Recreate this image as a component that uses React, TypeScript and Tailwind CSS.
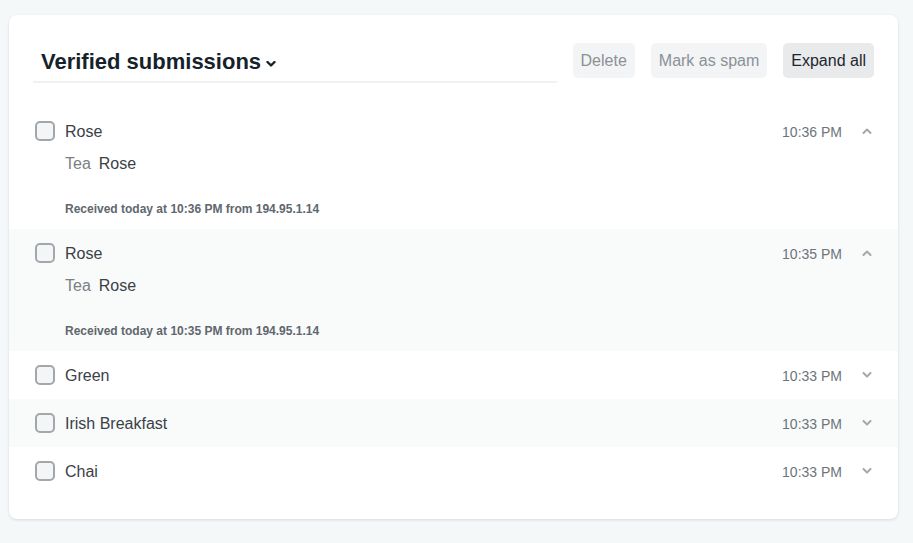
import React from "react";

type Row = { name: string; time: string; expanded?: boolean; gray?: boolean; received?: string };

const rows: Row[] = [
  { name: "Rose", time: "10:36 PM", expanded: true, received: "Received today at 10:36 PM from 194.95.1.14" },
  { name: "Rose", time: "10:35 PM", expanded: true, gray: true, received: "Received today at 10:35 PM from 194.95.1.14" },
  { name: "Green", time: "10:33 PM" },
  { name: "Irish Breakfast", time: "10:33 PM", gray: true },
  { name: "Chai", time: "10:33 PM" },
];

function Chevron({ up, className, sw = 2 }: { up?: boolean; className?: string; sw?: number }) {
  return (
    <svg width="10" height="6" viewBox="0 0 10 6" className={className}>
      <path
        d={up ? "M1.5 5 L5 1.5 L8.5 5" : "M1.5 1 L5 4.5 L8.5 1"}
        fill="none"
        stroke="currentColor"
        strokeWidth={sw}
        strokeLinecap="round"
        strokeLinejoin="round"
      />
    </svg>
  );
}

export default function App() {
  return (
    <div
      className="min-h-[543px] w-[913px] bg-[#f5f8f9] pt-[15px] pl-[9px]"
      style={{ fontFamily: '"Liberation Sans", Arial, sans-serif' }}
    >
      <div className="w-[889px] h-[504px] rounded-lg bg-white shadow-[0_1px_3px_rgba(0,0,0,0.12)] pt-[28px]">
        <div className="flex items-start px-6 gap-4">
          <div className="flex-1 h-[40px] border-b-2 border-[#eff1f2] flex items-center px-2">
            <span className="text-[22px] font-bold text-[#16222a] leading-none">Verified submissions</span>
            <Chevron className="ml-[5px] mt-[3px] text-[#16222a] w-[10px]" sw={2.4} />
          </div>
          <button className="h-[35px] px-2 rounded-[5px] bg-[#f3f4f5] text-[#8b9196] text-base">Delete</button>
          <button className="h-[35px] px-2 rounded-[5px] bg-[#f3f4f5] text-[#8b9196] text-base">Mark as spam</button>
          <button className="h-[35px] px-2 rounded-[5px] bg-[#e8eaeb] text-[#1d272e] text-base">Expand all</button>
        </div>
        <div className="mt-[24px]">
          {rows.map((r, i) => (
            <div key={i} className={`${r.gray ? "bg-[#f9fafa]" : "bg-white"} px-[26px]`}>
              <div className="h-12 flex items-center pt-[2px]">
                <div className="w-5 h-5 -mt-[2px] rounded-[5px] border-2 border-[#a2a7ab] bg-[#f3f5f6]" />
                <span className="ml-[10px] text-base text-[#3a4147]">{r.name}</span>
                <span className="ml-auto text-sm text-[#6d747a]">{r.time}</span>
                <Chevron up={r.expanded} className="ml-[20px] -mt-[2px] text-[#a3a8ac] w-[10px]" />
              </div>
              {r.expanded && (
                <div className="pl-[30px] pb-[13px]">
                  <div className="h-4 flex items-center text-base pt-[2px]">
                    <span className="text-[#7a8086]">Tea</span>
                    <span className="ml-[8px] text-[#3a4147]">Rose</span>
                  </div>
                  <div className="mt-[29px] h-4 flex items-center text-xs font-bold text-[#60676d] pt-[2px]">{r.received}</div>
                </div>
              )}
            </div>
          ))}
        </div>
      </div>
    </div>
  );
}
